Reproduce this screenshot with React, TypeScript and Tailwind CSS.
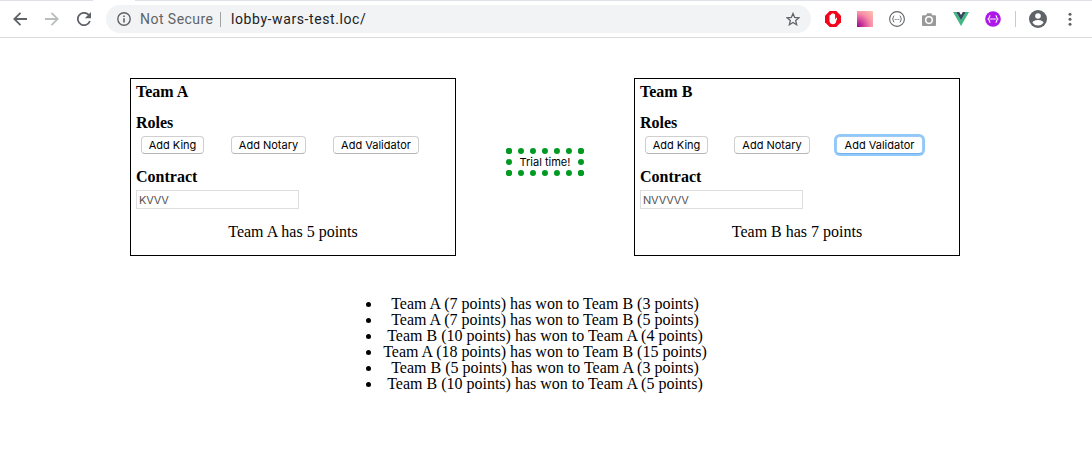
import React from "react";

function ToolbarIcons() {
  return (
    <div className="flex items-center">
      <svg className="ml-[14px] h-4 w-4" viewBox="0 0 16 16">
        <path d="M4.700 0h6.600L16 4.700v6.600L11.300 16H4.700L0 11.300V4.700z" fill="#f0051c" />
        <path d="M4.500 8V4.600a.7.7 0 0 1 1.400 0V3.400a.7.7 0 0 1 1.400 0V2.800a.7.7 0 0 1 1.400 0v.8a.7.7 0 0 1 1.400 0v4.800l1-1.300c.5-.6 1.300-.2.9.6L10.800 11.500c-.6 1.100-1.300 1.700-2.700 1.700-2.200 0-3.600-1.300-3.600-3.500z" fill="#fff" />
      </svg>
      <div className="ml-4 h-4 w-4 bg-[radial-gradient(circle_at_0%_100%,#8c0b8f_0%,#cf3f9b_30%,#f88fa8_62%,#ffc9ac_100%)]" />
      <svg className="ml-4 h-4 w-4" viewBox="0 0 16 16" fill="none" stroke="#62666a">
        <circle cx="8" cy="8" r="7.400" strokeWidth="1.100" />
        <path d="M5.300 4.800c-1.500 0-.5 2.500-1.900 3.200 1.400.7.4 3.200 1.900 3.200M10.700 4.800c1.500 0 .5 2.500 1.900 3.200-1.400.7-.4 3.200-1.900 3.200" strokeWidth="1" />
        <path d="M5.700 8.400h1M7.500 8.400h1M9.300 8.400h1" strokeWidth="1" />
      </svg>
      <svg className="ml-[17px] h-[13px] w-[14px]" viewBox="0 0 14 13">
        <path d="M1.300 2.200H4L5.200.2h4L10.300 2.200h2.400c.8 0 1.300.5 1.300 1.300v8.200c0 .8-.5 1.300-1.300 1.300H1.300C.5 13 0 12.500 0 11.700V3.500c0-.8.5-1.300 1.300-1.300z" fill="#999" />
        <circle cx="7" cy="7.100" r="3.300" fill="none" stroke="#fff" strokeWidth="1.500" />
      </svg>
      <svg className="ml-[17px] h-[14px] w-4" viewBox="0 0 16 14">
        <path d="M0 0h3.200L8 8.300 12.800 0H16L8 14z" fill="#41b883" />
        <path d="M3.200 0h3L8 3.100 9.800 0h3L8 8.300z" fill="#34495e" />
      </svg>
      <svg className="ml-4 h-4 w-4" viewBox="0 0 16 16">
        <circle cx="8" cy="8" r="7.800" fill="#ad17e8" />
        <path d="M5.400 4.600c-1.600 0-.6 2.700-2.100 3.400 1.500.7.500 3.400 2.100 3.400M10.600 4.600c1.600 0 .6 2.700 2.100 3.400-1.500.7-.5 3.400-2.100 3.400" stroke="#fff" fill="none" strokeWidth="1.100" />
        <path d="M5.500 8h1.200M7.400 8h1.200M9.300 8h1.200" stroke="#fff" strokeWidth="1.300" />
      </svg>
      <div className="ml-[14px] h-4 w-px bg-[#c8cacc]" />
      <svg className="ml-[13px] h-[18px] w-[18px]" viewBox="0 0 18 18">
        <circle cx="9" cy="9" r="9" fill="#5f6368" />
        <circle cx="9" cy="6" r="2.800" fill="#fff" />
        <path d="M3.500 12.800c.3-1.900 3.600-2.700 5.500-2.700s5.200.8 5.500 2.700A6.600 6.600 0 0 1 9 15.600a6.600 6.600 0 0 1-5.500-2.800z" fill="#fff" />
      </svg>
      <svg className="ml-[21px] h-[14px] w-1" viewBox="0 0 4 14" fill="#5f6368">
        <circle cx="2" cy="2.200" r="1.500" />
        <circle cx="2" cy="7.200" r="1.500" />
        <circle cx="2" cy="12.200" r="1.500" />
      </svg>
    </div>
  );
}

function BrowserBar() {
  return (
    <header className="h-[38px] border-b border-[#d9dadc] bg-white">
      <div className="flex h-px justify-between">
        <div className="w-[93px] bg-[#dee1e6]" />
        <div className="w-[957px] bg-[#dee1e6]" />
      </div>
      <div className="flex h-9 items-center">
        <svg className="ml-[13px] h-[14px] w-[14px]" viewBox="0 0 14 14" fill="none" stroke="#5f6368" strokeWidth="1.800">
          <path d="M14 7H1.500M7.500.8L1.300 7l6.200 6.200" />
        </svg>
        <svg className="ml-[18px] h-[14px] w-[14px]" viewBox="0 0 14 14" fill="none" stroke="#babcbe" strokeWidth="1.800">
          <path d="M0 7h12.500M6.500.8L12.700 7l-6.200 6.200" />
        </svg>
        <svg className="ml-[18px] h-[14px] w-[14px]" viewBox="0 0 14 14">
          <path d="M12.900 9A6.200 6.200 0 1 1 11.500 2.700L12.600 4" fill="none" stroke="#5f6368" strokeWidth="1.800" />
          <path d="M14 0v6.200H7.800z" fill="#5f6368" />
        </svg>
        <div className="ml-[15px] flex h-7 w-[705px] items-center rounded-full bg-[#f1f3f4]">
          <svg className="ml-[11px] h-[14px] w-[14px]" viewBox="0 0 14 14" fill="none" stroke="#5f6368" strokeWidth="1.400">
            <circle cx="7" cy="7" r="6.200" />
            <path d="M7 6.200v4.200M7 3.400v1.500" strokeWidth="1.600" />
          </svg>
          <span className="ml-[9px] w-[80px] whitespace-nowrap font-['Roboto',sans-serif] text-[14px] leading-5 tracking-[0.46px] text-[#5f6368]">Not Secure</span>
          <span className="h-[15px] w-px bg-[#a0a3a6]" />
          <span className="ml-[10px] whitespace-nowrap font-['Roboto',sans-serif] text-[14px] leading-5 tracking-[0.59px] text-[#202124]">lobby-wars-test.loc/</span>
          <svg className="mr-[11px] ml-auto h-[14px] w-[14px]" viewBox="0 0 14 14" fill="none" stroke="#5f6368" strokeWidth="1.300">
            <path d="M7 1.500l1.650 3.900 4.250.36-3.220 2.800.96 4.140L7 10.500l-3.640 2.200.96-4.140L1.100 5.760l4.250-.36z" />
          </svg>
        </div>
        <ToolbarIcons />
      </div>
    </header>
  );
}

const macButton =
  "h-[18px] rounded-[4px] border bg-white text-center font-['Inter',sans-serif] text-[11px] leading-[16px] whitespace-nowrap text-black";
const plainEdge = " border-[#cfcfcf] border-b-[#b5b5b5]";
const focusEdge = " border-[#9dcbf5] border-b-[#6fb0ee] shadow-[0_0_0_2px_#8fc8f9]";

interface TeamProps {
  name: string;
  contract: string;
  points: number;
  focused?: boolean;
}

function Team({ name, contract, points, focused = false }: TeamProps) {
  return (
    <section className="h-[178px] w-[326px] border border-black px-[5px] pt-[4px]">
      <h4 className="text-[16px] leading-[18px] font-bold">{name}</h4>
      <h4 className="mt-[13px] text-[16px] leading-[18px] font-bold">Roles</h4>
      <div className="mt-[4px] flex pl-[5px]">
        <button className={macButton + plainEdge + " w-[63px]"}>Add King</button>
        <button className={macButton + plainEdge + (focused ? " ml-[26px] w-[76px]" : " ml-[27px] w-[75px]")}>Add Notary</button>
        <button className={macButton + (focused ? focusEdge + " ml-[26px] w-[87px]" : plainEdge + " ml-[27px] w-[86px]")}>
          Add Validator
        </button>
      </div>
      <h4 className="mt-[14px] text-[16px] leading-[18px] font-bold">Contract</h4>
      <input
        readOnly
        value={contract}
        className="mt-[4px] block h-[19px] w-[163px] border border-[#dedede] bg-white px-[2px] font-['Inter',sans-serif] text-[11px] tracking-[-0.2px] text-[#545454] outline-none"
      />
      <p className="mt-[14px] text-center text-[16px] leading-[18px]">
        {name} has {points} points
      </p>
    </section>
  );
}

const results = [
  "Team A (7 points) has won to Team B (3 points)",
  "Team A (7 points) has won to Team B (5 points)",
  "Team B (10 points) has won to Team A (4 points)",
  "Team A (18 points) has won to Team B (15 points)",
  "Team B (5 points) has won to Team A (3 points)",
  "Team B (10 points) has won to Team A (5 points)",
];

export default function App() {
  return (
    <div className="h-[462px] overflow-hidden bg-white font-['Liberation_Serif',serif] text-black">
      <BrowserBar />
      <main>
        <div className="flex items-start pt-[40px] pl-[130px]">
          <Team name="Team A" contract="KVVV" points={5} />
          <button className="mt-[70px] mr-[50px] ml-[50px] h-[28px] w-[78px] border-[6px] border-dotted border-[#009a22] font-['Inter',sans-serif] text-[11px] leading-[16px] whitespace-nowrap">
            Trial time!
          </button>
          <Team name="Team B" contract="NVVVVV" points={7} focused />
        </div>
        <ul className="mt-[40px] ml-[382px] w-[325px] list-disc text-center text-[16px] leading-[16px] whitespace-nowrap">
          {results.map((result) => (
            <li key={result} className="pl-px">{result}</li>
          ))}
        </ul>
      </main>
    </div>
  );
}
